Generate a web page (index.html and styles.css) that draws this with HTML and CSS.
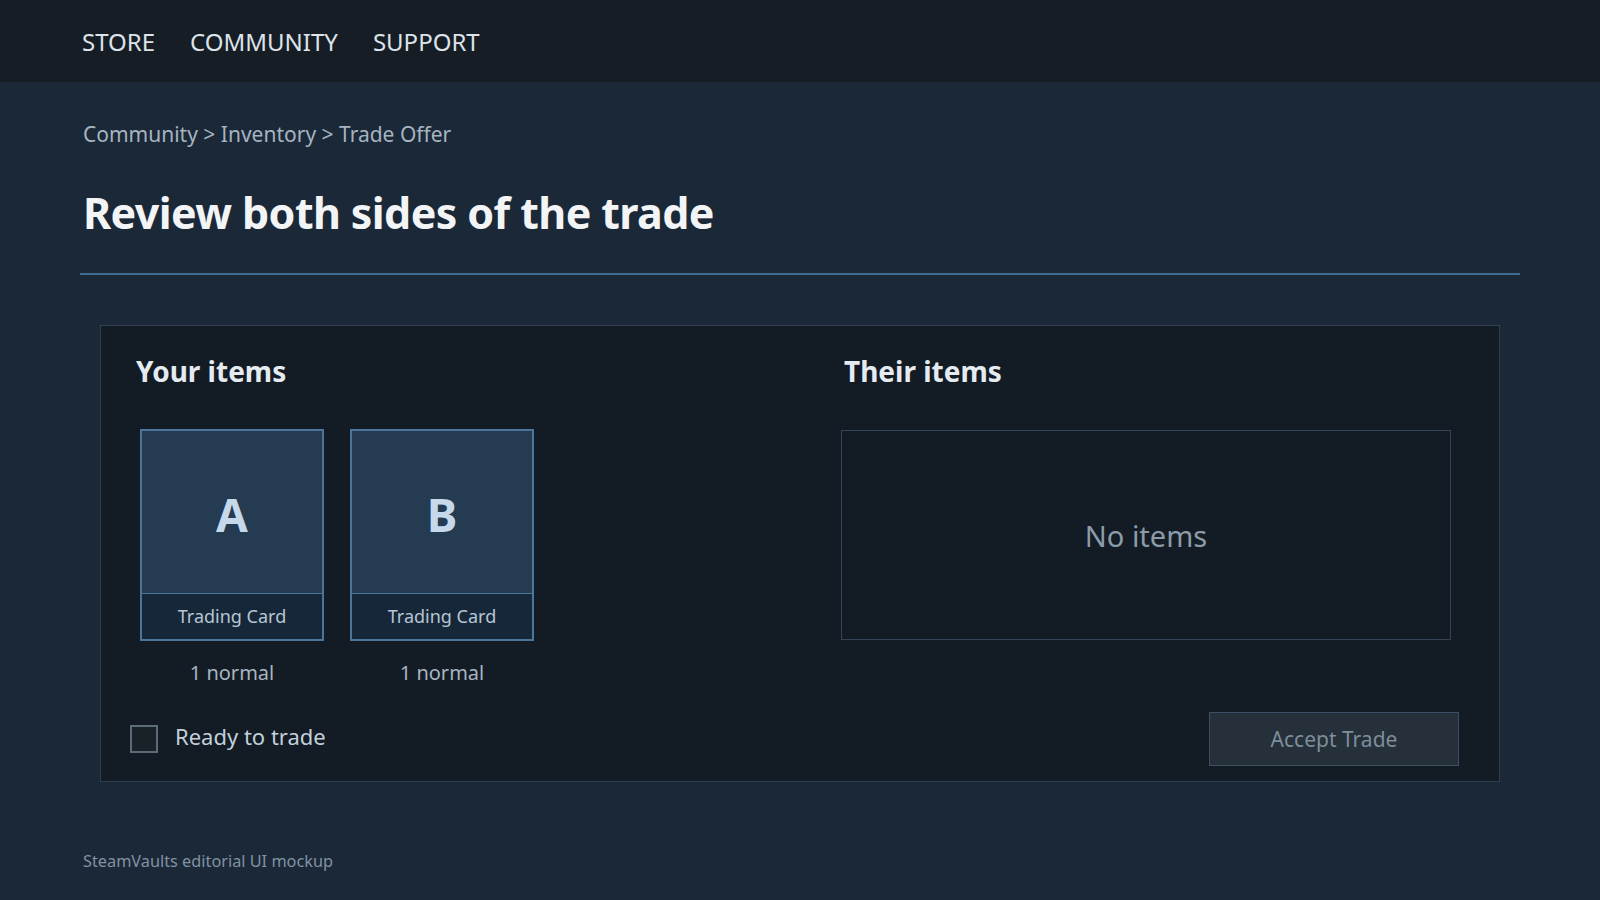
FILE: index.html
```html
<!DOCTYPE html>
<html lang="en">
<head>
  <meta charset="UTF-8" />
  <meta name="viewport" content="width=device-width, initial-scale=1.0" />
  <title>Trade Offer – SteamVaults</title>
  <link rel="stylesheet" href="styles.css">
</head>
<body>
  <nav class="topbar">
    <a href="#">STORE</a>
    <a href="#">COMMUNITY</a>
    <a href="#">SUPPORT</a>
  </nav>

  <main class="page">
    <div class="crumbs">Community &gt; Inventory &gt; Trade Offer</div>
    <h1 class="title">Review both sides of the trade</h1>

    <section class="trade">
      <h2 class="side-title">Your items</h2>
      <h2 class="side-title">Their items</h2>

      <div class="items">
        <div class="item">
          <div class="card">
            <div class="card-art">A</div>
            <div class="card-label">Trading Card</div>
          </div>
          <div class="item-qty">1 normal</div>
        </div>
        <div class="item">
          <div class="card">
            <div class="card-art">B</div>
            <div class="card-label">Trading Card</div>
          </div>
          <div class="item-qty">1 normal</div>
        </div>
      </div>

      <div class="empty">No items</div>

      <label class="ready">
        <span class="check"></span>
        <span class="ready-text">Ready to trade</span>
      </label>

      <button class="accept" disabled>Accept Trade</button>
    </section>

    <footer class="note">SteamVaults editorial UI mockup</footer>
  </main>
</body>
</html>
```

FILE: styles.css
```css
body {
  margin: 0;
  font-family: 'Noto Sans', 'Open Sans', sans-serif;
  background: #1b2838;
  color: #c7d5e0;
}
.topbar {
  height: 82px;
  background: #171d25;
  display: flex;
  align-items: center;
  gap: 35px;
  padding: 0 82px;
}
.topbar a {
  color: #dce3ea;
  text-decoration: none;
  font-size: 24px;
}
.page {
  padding: 0 80px;
}
.crumbs {
  padding-top: 38px;
  font-size: 21px;
  line-height: 28px;
  color: #a6b4c0;
  padding-left: 3px;
}
.title {
  margin: 39px 0 0;
  padding: 0 0 34px 3px;
  font-size: 43px;
  line-height: 52px;
  letter-spacing: -0.6px;
  font-weight: 700;
  color: #f2f4f6;
  border-bottom: 2px solid #3e6b92;
}
.trade {
  margin: 50px 20px 0;
  background: #131b24;
  border: 1px solid #2e3f50;
  padding: 27px 40px 15px 32px;
  display: grid;
  grid-template-columns: 628px 1fr;
  column-gap: 80px;
  align-items: center;
}
.side-title {
  margin: 0;
  font-size: 28px;
  line-height: 36px;
  font-weight: 700;
  color: #e4ebf1;
  padding-left: 3px;
}
.items {
  display: flex;
  gap: 26px;
  padding-left: 7px;
  margin-top: 40px;
  align-self: start;
}
.item {
  width: 184px;
  text-align: center;
}
.card {
  border: 2px solid #4b7699;
  background: #16273a;
}
.card-art {
  height: 158px;
  padding-top: 4px;
  background: #253b51;
  border-bottom: 1px solid #4b7699;
  display: flex;
  align-items: center;
  justify-content: center;
  font-size: 46px;
  font-weight: 700;
  color: #c5d9ea;
}
.card-label {
  height: 45px;
  line-height: 45px;
  font-size: 18px;
  color: #b6c5d2;
}
.item-qty {
  margin-top: 18px;
  font-size: 20px;
  line-height: 28px;
  color: #a7b5c1;
}
.empty {
  width: 610px;
  height: 210px;
  box-sizing: border-box;
  margin-top: 41px;
  align-self: start;
  border: 1px solid #324456;
  display: flex;
  align-items: center;
  justify-content: center;
  font-size: 29px;
  color: #8b9ba8;
}
.ready {
  margin-top: 25px;
  display: flex;
  align-items: center;
  gap: 17px;
  margin-left: -3px;
  font-size: 22px;
  color: #c2d0dc;
}
.ready-text {
  margin-bottom: 6px;
}
.check {
  width: 28px;
  height: 28px;
  box-sizing: border-box;
  border: 2px solid #5b6b78;
  background: #1a2229;
}
.accept {
  margin-top: 25px;
  justify-self: end;
  width: 250px;
  height: 54px;
  background: #25303b;
  border: 1px solid #3d5063;
  font-family: inherit;
  font-size: 21px;
  color: #7e8d9a;
}
.note {
  padding: 68px 0 20px 3px;
  font-size: 16.3px;
  color: #8192a1;
}
```
